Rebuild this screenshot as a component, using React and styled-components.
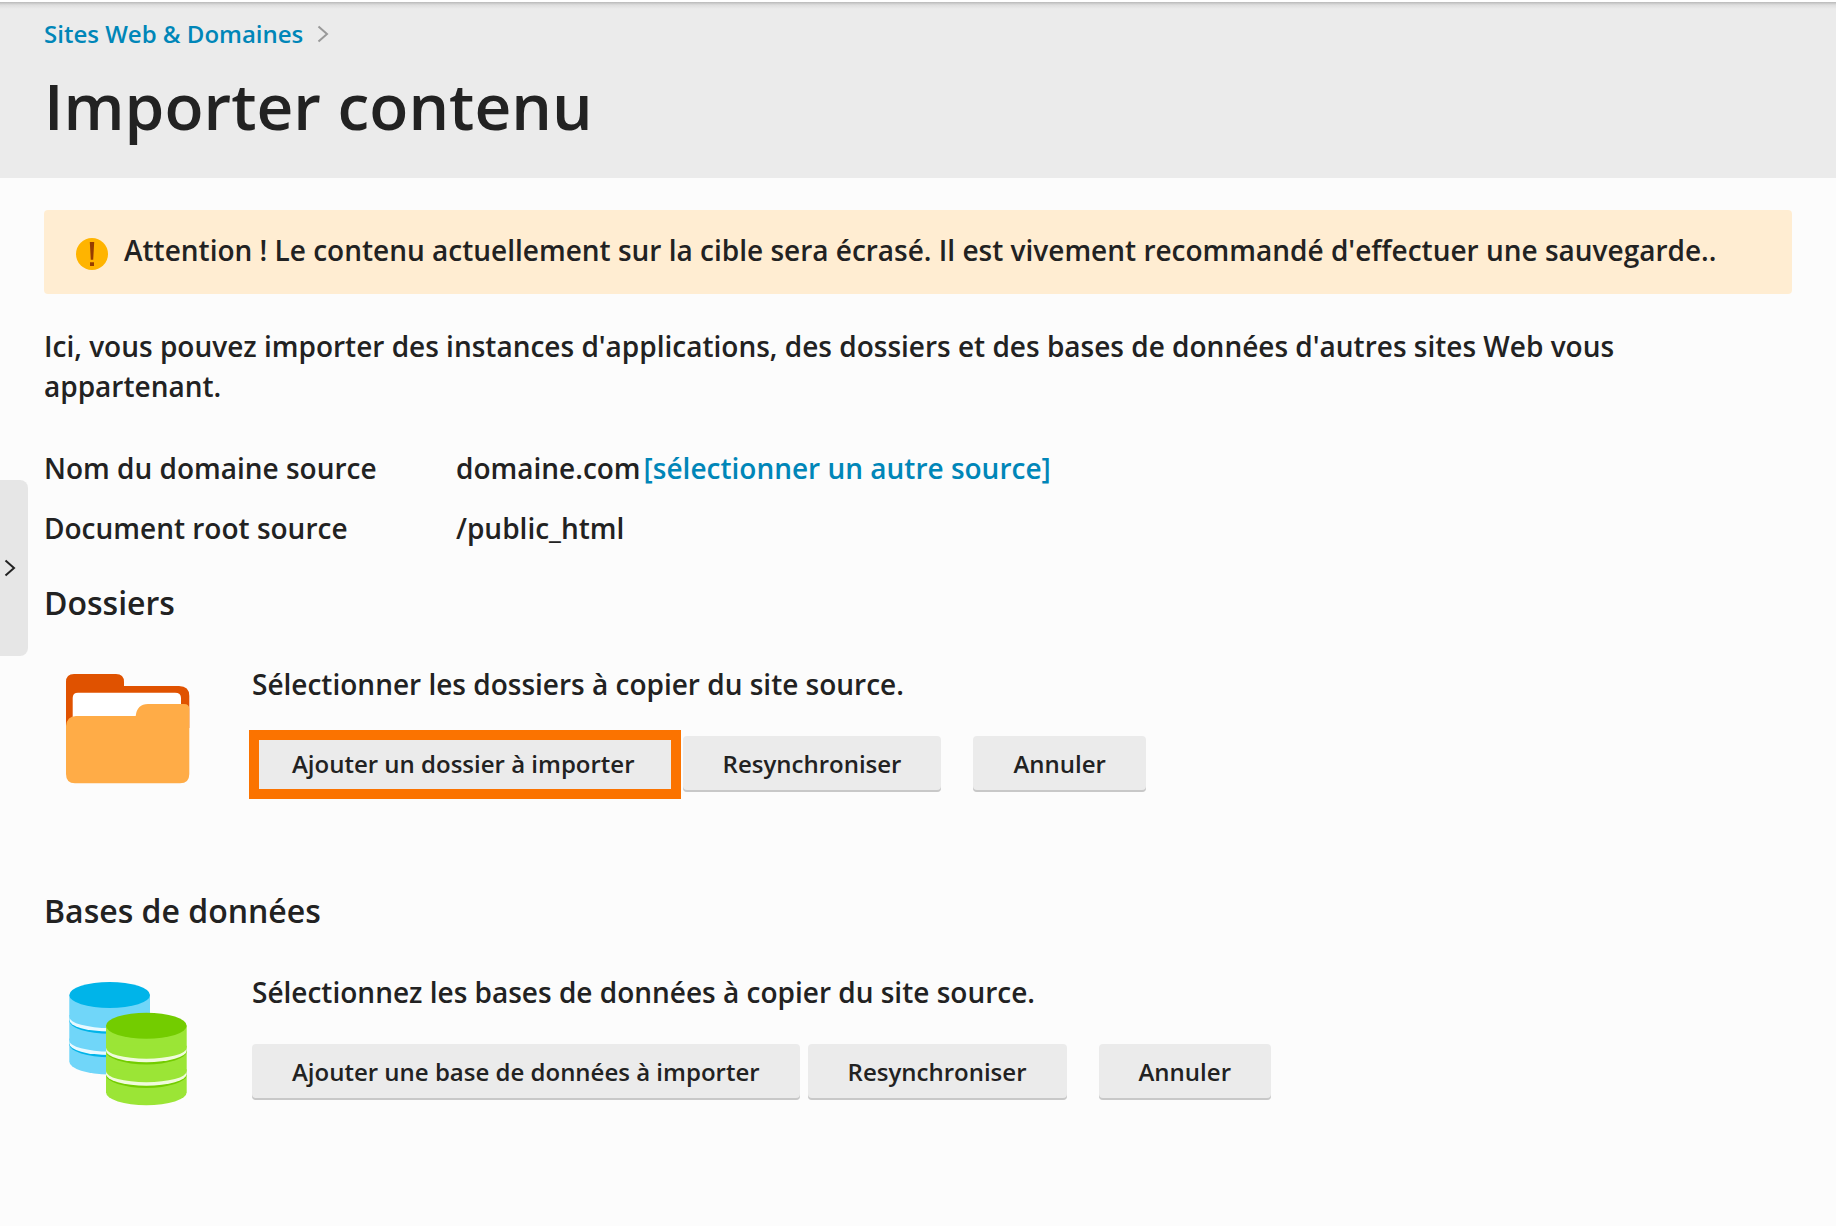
import styled, {createGlobalStyle, css} from 'styled-components';

function Chevron() {
    return (
    <svg width="12" height="18" viewBox="0 0 12 18" fill="none" stroke="currentColor" strokeWidth="2" aria-hidden="true">
      <path d="M1.5 1.5 L10 9 L1.5 16.5" />
    </svg>
    );
}

function WarningIcon() {
    return (
    <svg width="32" height="32" viewBox="0 0 32 32" aria-hidden="true">
      <circle cx="16" cy="16" r="16" fill="#ffb400" />
      <path d="M13.8 4 H18.2 L17.2 21.8 H14.8 Z M14 24.2 H18 V28 H14 Z" fill="#963c00" />
    </svg>
    );
}

function FolderIcon() {
    return (
    <svg width="128" height="128" viewBox="0 0 128 128" aria-hidden="true">
      <path d="M2 56 V10 Q2 2 10 2 H52 Q60 2 60 10 V14 H115 Q125.300 14 125.300 24 V56 Z" fill="#e05200" />
      <path d="M8.700 50 V26 Q8.700 20.700 14 20.700 H111 Q117 20.700 117 26 V50 Z" fill="#ffffff" />
      <path d="M2 54 Q3 44 12 44 H71.700 Q73 32 84 32 H120 Q125.300 32 125.300 37 V102 Q125.300 111.300 116 111.300 H11 Q2 111.300 2 102 Z" fill="#ffac47" />
    </svg>
    );
}

function Cylinder({x, y, dark, light, band}) {
    return (
    <g transform={`translate(${x} ${y})`}>
      <path d="M0 13 V79.500 A40.350 13 0 0 0 80.700 79.500 V13 Z" fill={light} />
      {[0, 23.5].map((offset) => (
        <g key={offset} transform={`translate(0 ${offset})`}>
          <path d="M0 38.700 A40.350 13 0 0 0 80.700 38.700 V34 H0 Z" fill={dark} />
          <path d="M0 34 V38 A40.350 11.500 0 0 0 80.700 38 V34 Z" fill={band} />
          <path d="M0 33 V35 A40.350 11 0 0 0 80.700 35 V33 Z" fill={light} />
        </g>
      ))}
      <ellipse cx="40.350" cy="13" rx="40.350" ry="13" fill={dark} />
    </g>
    );
}

function DatabaseIcon() {
    return (
    <svg width="128" height="128" viewBox="0 0 128 128" aria-hidden="true">
      <Cylinder x={5.3} y={2} dark="#00b4e9" light="#70d6f9" band="#e9f9ff" />
      <Cylinder x={42} y={32.7} dark="#73cc00" light="#9be536" band="#f0fbdc" />
    </svg>
    );
}

function ImportSection({title, icon, text, addLabel, highlighted}) {
    return (
    <Section>
      <SectionTitle>{title}</SectionTitle>
      <SectionBody>
        <IconBox>{icon}</IconBox>
        <div>
          <Text>{text}</Text>
          <Buttons>
            <Button type="button" $highlighted={highlighted}>{addLabel}</Button>
            <Button type="button">Resynchroniser</Button>
            <CancelButton type="button">Annuler</CancelButton>
          </Buttons>
        </div>
      </SectionBody>
    </Section>
    );
}

function App() {
    return (
    <>
      <GlobalStyle />
      <Header>
        <Breadcrumb aria-label="Navigation">
          <Link href="#">Sites Web &amp; Domaines</Link>
          <Chevron />
        </Breadcrumb>
        <Title>Importer contenu</Title>
      </Header>
      <SidebarToggle type="button" aria-expanded="false">
        <Chevron />
      </SidebarToggle>
      <Content>
        <Alert role="alert">
          <AlertIcon><WarningIcon /></AlertIcon>
          <Text>Attention ! Le contenu actuellement sur la cible sera écrasé. Il est vivement recommandé d'effectuer une sauvegarde..</Text>
        </Alert>
        <Text>Ici, vous pouvez importer des instances d'applications, des dossiers et des bases de données d'autres sites Web vous appartenant.</Text>
        <SourceInfo>
          <dt>Nom du domaine source</dt>
          <dd>domaine.com<Link href="#">[sélectionner un autre source]</Link></dd>
          <dt>Document root source</dt>
          <dd>/public_html</dd>
        </SourceInfo>
        <ImportSection
          title="Dossiers"
          icon={<FolderIcon />}
          text="Sélectionner les dossiers à copier du site source."
          addLabel="Ajouter un dossier à importer"
          highlighted
        />
        <ImportSection
          title="Bases de données"
          icon={<DatabaseIcon />}
          text="Sélectionnez les bases de données à copier du site source."
          addLabel="Ajouter une base de données à importer"
        />
      </Content>
    </>
    );
}

const GlobalStyle = createGlobalStyle`
* {
  box-sizing: border-box;
}

body {
  margin: 0;
  background: #fcfcfc;
  color: #222222;
  font-family: "Open Sans", "Noto Sans", sans-serif;
  font-size: 28px;
  font-weight: 600;
  line-height: 40px;
}
`;

const Header = styled.header`
padding: 16px 44px 32px;
border-top: 2px solid #ffffff;
background: linear-gradient(to bottom, #b9b9b9 0, #dedede 3px, #ebebeb 7px) padding-box;
`;

const Breadcrumb = styled.nav`
display: flex;
align-items: center;
gap: 14px;
margin-bottom: 16px;
color: #999999;
font-size: 24px;
line-height: 32px;
`;

const Link = styled.a`
color: #0086b8;
text-decoration: none;
`;

const Title = styled.h1`
margin: 0;
font-size: 64px;
font-weight: 600;
line-height: 80px;
`;

const SidebarToggle = styled.button`
position: absolute;
top: 480px;
left: 0;
display: flex;
align-items: center;
width: 28px;
height: 176px;
padding: 0 4px;
border: none;
border-radius: 0 8px 8px 0;
background: #e6e6e6;
color: #222222;
cursor: pointer;
`;

const Content = styled.main`
padding: 32px 44px;
`;

const Alert = styled.div`
display: flex;
gap: 16px;
margin-bottom: 32px;
padding: 20px 32px 24px;
border-radius: 4px;
background: #ffedd2;
`;

const AlertIcon = styled.span`
display: flex;
flex-shrink: 0;
padding-top: 8px;
`;

const Text = styled.p`
margin: 0;
`;

const SourceInfo = styled.dl`
display: grid;
grid-template-columns: 412px 1fr;
row-gap: 20px;
margin: 42px 0 35px;

dd {
  display: flex;
  gap: 3px;
  margin: 0;
}
`;

const Section = styled.section`
margin-bottom: 91px;
`;

const SectionTitle = styled.h2`
margin: 0 0 41px;
font-size: 32px;
font-weight: 600;
line-height: 40px;
`;

const SectionBody = styled.div`
display: flex;
gap: 60px;
padding-left: 20px;
`;

const IconBox = styled.div`
display: flex;
flex-shrink: 0;
padding-top: 8px;
`;

const Buttons = styled.div`
display: flex;
flex-wrap: wrap;
gap: 8px;
margin-top: 32px;
`;

const Button = styled.button`
position: relative;
height: 56px;
padding: 0 40px;
border: none;
border-radius: 4px;
background: #ebebeb;
box-shadow: inset 0 -2px 0 #c8c8c8;
color: inherit;
font: inherit;
font-size: 24px;
line-height: 32px;
cursor: pointer;

${({$highlighted}) => $highlighted && css`
  &::after {
    content: "";
    position: absolute;
    inset: -6px -6px -7px -3px;
    border: 10px solid #fb7300;
  }
`}
`;

const CancelButton = styled(Button)`
margin-left: 24px;
`;

export default App;
